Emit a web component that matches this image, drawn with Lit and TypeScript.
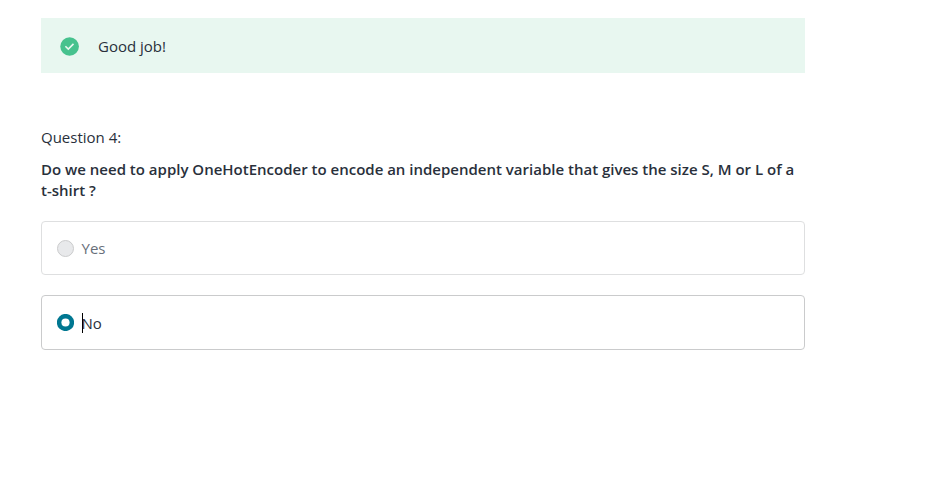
import { LitElement, html, css } from "lit";
import { customElement, property } from "lit/decorators.js";

@customElement("feedback-banner")
class FeedbackBanner extends LitElement {
  static styles = css`
    :host { display: flex; align-items: center; height: 55px; box-sizing: border-box; padding-left: 19px; background: #e8f7f0; }
    svg { width: 19px; height: 19px; margin: 1px 19px 0 0; }
    span { line-height: 22px; }
  `;
  render() {
    return html`<svg viewBox="0 0 19 19"><circle cx="9.6" cy="9.5" r="9.3" fill="#46c28e"/><path d="M5.4 9.2l2.9 2.9 5.2-5.2" fill="none" stroke="#e8f7f0" stroke-width="1.6"/></svg><span><slot></slot></span>`;
  }
}

@customElement("answer-option")
class AnswerOption extends LitElement {
  @property({ type: Boolean, reflect: true }) selected = false;
  static styles = css`
    :host { display: flex; align-items: center; height: 54px; box-sizing: border-box; border: 1px solid #dedfe0; border-radius: 4px; padding-left: 15px; color: #686f7a; }
    :host([selected]) { height: 55px; border-color: #cacbcc; color: #29303b; }
    .radio { width: 17px; height: 17px; margin-right: 7.5px; }
    .label { line-height: 22px; position: relative; }
    :host([selected]) .label { padding-top: 1px; }
    .caret { position: absolute; left: 0.5px; top: 2px; width: 1px; height: 20px; background: #000; }
  `;
  render() {
    return html`<svg class="radio" viewBox="0 0 17 17">${this.selected
      ? html`<svg viewBox="0 0 17 17"><circle cx="8.5" cy="8.5" r="8.6" fill="#007791"/><circle cx="8.5" cy="8.5" r="4.1" fill="#fff"/></svg>`
      : html`<svg viewBox="0 0 17 17"><circle cx="8.5" cy="8.5" r="8" fill="#e8e9eb" stroke="#cacbcc"/></svg>`}</svg><span class="label"><slot></slot>${this.selected ? html`<i class="caret"></i>` : ""}</span>`;
  }
}

@customElement("app-root")
class AppRoot extends LitElement {
  static styles = css`
    :host { display: block; height: 488px; box-sizing: border-box; background: #fff; padding: 18px 0 0 41px; font: 15px/21px "Open Sans", sans-serif; color: #29303b; overflow: hidden; }
    main { width: 764px; }
    .number { margin-top: 53px; line-height: 22px; }
    .prompt { margin-top: 11px; font-weight: 600; line-height: 21px; }
    .options { margin-top: 20px; display: grid; gap: 20px; }
  `;
  render() {
    return html`<main>
      <feedback-banner>Good job!</feedback-banner>
      <div class="number">Question 4:</div>
      <div class="prompt">Do we need to apply OneHotEncoder to encode an independent variable that gives the size S, M or L of a t-shirt ?</div>
      <div class="options"><answer-option>Yes</answer-option><answer-option selected>No</answer-option></div>
    </main>`;
  }
}
